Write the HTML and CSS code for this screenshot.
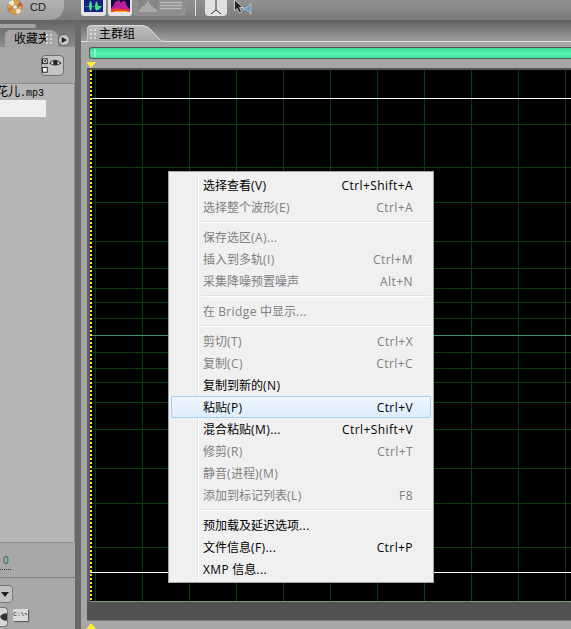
FILE: index.html
```html
<!DOCTYPE html>
<html lang="zh">
<head>
<meta charset="utf-8">
<title>Audition</title>
<link rel="stylesheet" href="styles.css">
</head>
<body>
<div class="app">
  <header class="toolbar">
    <div class="cd-pill">
      <svg class="cd-icon" width="16" height="16" viewBox="0 0 16 16"><circle cx="8" cy="8" r="7.500" fill="#d8a24a" stroke="#8a7a66" stroke-width=".6"/><path d="M8 8 L1.200 4.500 A7.500 7.500 0 0 1 6 .8Z" fill="#f3ecd6"/><path d="M8 8 L14.800 11.500 A7.500 7.500 0 0 1 10 15.200Z" fill="#efe2bc"/><path d="M8 8 L13.500 2.800 A7.500 7.500 0 0 1 15.400 7Z" fill="#c2603c"/><path d="M8 8 L2.500 13.200 A7.500 7.500 0 0 1 .6 9Z" fill="#c9803e"/><circle cx="8" cy="8" r="2.400" fill="#e6e6e6" stroke="#777" stroke-width=".6"/></svg>
      <span class="cd-label">CD</span>
    </div>
    <div class="btn-group">
      <span class="tool-btn lit"><svg width="19" height="12" viewBox="0 0 19 12"><rect width="19" height="12" fill="#14207e"/><path d="M1 6H5Q5.500 1 6.500 1T8 6H11Q11.500 1.500 12.500 1.500T14 6H18Q14 11 12.500 10.500T11 6.500H8Q7.500 11 6.500 11T5 6.500H1Z" fill="#46e08a"/></svg></span>
      <span class="tool-btn lit second"><svg width="19" height="12" viewBox="0 0 19 12"><rect width="19" height="12" fill="#130a38"/><path d="M0 12V8L2 6 4 2 6 1 8 0 10 3 12 1 14 1 16 6 19 9V12Z" fill="#b0229c"/><path d="M0 12V10L5 8 10 9 15 9 19 11V12Z" fill="#f0442a"/><path d="M3 12V11H16V12Z" fill="#ffb03a"/></svg></span>
      <div class="dim-group">
        <span class="tool-dim"><svg width="20" height="12" viewBox="0 0 20 12"><rect width="20" height="12" fill="#868686"/><path d="M2 12V9M4 12V7M6 12V6M8 12V3M10 12V1M12 12V4M14 12V6M16 12V8M18 12V9" stroke="#cdcdcd"/></svg></span>
        <span class="tool-dim"><svg width="22" height="12" viewBox="0 0 22 12"><rect width="22" height="12" fill="#8e8e8e"/><path d="M0 2.500H22M0 5.500H22M0 8.500H22" stroke="#bcbcbc" stroke-width="1.500"/></svg></span>
      </div>
    </div>
    <span class="tool-sep"></span>
    <span class="tool-btn single"><svg width="14" height="14" viewBox="0 0 14 14"><path d="M7 0V10M7 10L2 14M7 10L12 14" stroke="#333" fill="none"/></svg></span>
    <svg class="cursor-icon" width="18" height="15" viewBox="0 0 18 15"><path d="M.5 0V11L3 8.500 5.500 13 7.500 12 5.500 7.500H9Z" fill="#222" stroke="#eee" stroke-width=".7"/><path d="M9 8 12 8 17 3V14L12 9.500H9Z" fill="#6c9cc6" stroke="#dce6ee" stroke-width=".5"/></svg>
  </header>

  <div class="workspace">
    <aside class="left-panel">
      <div class="left-top">
        <div class="left-strip"></div>
        <div class="left-tabs">
          <div class="left-tab">
            <span class="left-tab-text">收藏夹</span>
            <span class="grip small"></span>
          </div>
          <span class="round-btn"><svg width="6" height="6" viewBox="0 0 8 8"><path d="M1 0 8 4 1 8Z" fill="#222"/></svg></span>
        </div>
      </div>
      <div class="left-tools">
        <span class="eye-btn">
          <svg width="22" height="20" viewBox="0 0 22 20"><rect x=".5" y="2.500" width="5" height="5" fill="#fff" stroke="#222"/><path d="M1.500 3.500l3 3M4.500 3.500l-3 3" stroke="#222"/><rect x=".5" y="11.500" width="5" height="5" fill="#fff" stroke="#222"/><path d="M8 7Q13 1 20 7 13 11 8 7Z" fill="#ddd" stroke="#222"/><circle cx="14" cy="6.500" r="2.400" fill="#222"/></svg>
        </span>
      </div>
      <div class="file-list">
        <div class="file-name"><span class="file-cjk">花儿</span><span class="file-ext">.mp3</span></div>
        <div class="file-selected"></div>
      </div>
      <div class="left-meter">
        <span class="meter-zero">0</span>
        <span class="meter-dots"></span>
      </div>
      <div class="left-controls">
        <span class="drop-btn"><svg width="8" height="5" viewBox="0 0 8 5"><path d="M0 0H8L4 5Z" fill="#222"/></svg></span>
        <div class="left-icons">
          <span class="mini-eye"><svg width="8" height="10" viewBox="0 0 8 10"><path d="M0 5Q3 0 8 1V9Q3 10 0 5Z" fill="#333"/></svg></span>
          <span class="cmd-icon">C:\&gt;</span>
        </div>
      </div>
    </aside>
    <div class="divider"></div>
    <main class="main-panel">
      <div class="main-tabs">
        <div class="main-tab">
          <svg class="tab-shape" width="78" height="17" viewBox="0 0 78 17"><defs><linearGradient id="tabfill" x1="0" y1="0" x2="0" y2="1"><stop offset="0" stop-color="#bdbdbd"/><stop offset="1" stop-color="#a6a6a6"/></linearGradient></defs><path d="M0 17V5Q0 .5 5 .5H55Q61 .5 65 6L72 14Q74 16.500 78 16.500V17Z" fill="url(#tabfill)" stroke="#dcdcdc"/></svg>
          <span class="grip"></span>
          <span class="tab-label">主群组</span>
        </div>
      </div>
      <div class="main-body">
        <div class="overview"><span class="overview-handle"></span></div>
        <div class="ruler"><span class="marker"></span></div>
        <div class="wave-frame">
          <svg class="wave" width="481" height="532" viewBox="0 0 481 532" shape-rendering="crispEdges">
            <rect width="481" height="532" fill="#000"/>
            <g class="grid">
              <path d="M5.500 0V532M52.500 0V532M99.500 0V532M146.500 0V532M193.500 0V532M240.500 0V532M287.500 0V532M334.500 0V532M381.500 0V532M428.500 0V532M475.500 0V532"/>
              <path d="M0 54.500H481M0 97.500H481M0 132.500H481M0 171.500H481M0 198.500H481M0 218.500H481M0 232.500H481M0 248.500H481M0 282.500H481M0 298.500H481M0 312.500H481M0 332.500H481M0 359.500H481M0 398.500H481M0 433.500H481M0 477.500H481"/>
            </g>
            <path class="midline" d="M0 265.500H481"/>
            <path class="trace" d="M0 28.500H481M0 502.500H481"/>
            <path class="cursor-line" d="M1 0V532"/>
            <path class="base" d="M0 531.500H481"/>
          </svg>
        </div>
        <div class="wave-footer"></div>
        <div class="bottom-ruler"><span class="marker up"></span></div>
      </div>
    </main>
  </div>

  <nav class="context-menu">
    <div class="menu-row"><span>选择查看<i class="lat">(V)</i></span><span class="lat">Ctrl+Shift+A</span></div>
    <div class="menu-row off"><span>选择整个波形<i class="lat">(E)</i></span><span class="lat">Ctrl+A</span></div>
    <div class="menu-sep"></div>
    <div class="menu-row off"><span>保存选区<i class="lat">(A)...</i></span></div>
    <div class="menu-row off"><span>插入到多轨<i class="lat">(I)</i></span><span class="lat">Ctrl+M</span></div>
    <div class="menu-row off"><span>采集降噪预置噪声</span><span class="lat">Alt+N</span></div>
    <div class="menu-sep"></div>
    <div class="menu-row off"><span>在 <i class="lat">Bridge</i> 中显示<i class="lat">...</i></span></div>
    <div class="menu-sep"></div>
    <div class="menu-row off"><span>剪切<i class="lat">(T)</i></span><span class="lat">Ctrl+X</span></div>
    <div class="menu-row off"><span>复制<i class="lat">(C)</i></span><span class="lat">Ctrl+C</span></div>
    <div class="menu-row"><span>复制到新的<i class="lat">(N)</i></span></div>
    <div class="menu-row hot"><span>粘贴<i class="lat">(P)</i></span><span class="lat">Ctrl+V</span></div>
    <div class="menu-row"><span>混合粘贴<i class="lat">(M)...</i></span><span class="lat">Ctrl+Shift+V</span></div>
    <div class="menu-row off"><span>修剪<i class="lat">(R)</i></span><span class="lat">Ctrl+T</span></div>
    <div class="menu-row off"><span>静音<i class="lat">(</i>进程<i class="lat">)(M)</i></span></div>
    <div class="menu-row off"><span>添加到标记列表<i class="lat">(L)</i></span><span class="lat">F8</span></div>
    <div class="menu-sep"></div>
    <div class="menu-row"><span>预加载及延迟选项<i class="lat">...</i></span></div>
    <div class="menu-row"><span>文件信息<i class="lat">(F)...</i></span><span class="lat">Ctrl+P</span></div>
    <div class="menu-row"><span><i class="lat">XMP</i> 信息<i class="lat">...</i></span></div>
  </nav>
</div>
</body>
</html>
```
FILE: styles.css
```css
* { box-sizing: border-box; }
html, body { margin: 0; height: 100%; }
body { overflow: hidden; background: #a5a5a5; font-family: "Open Sans", "Noto Sans CJK SC", sans-serif; font-size: 12px; color: #000; }
.app { position: relative; width: 571px; height: 629px; overflow: hidden; display: flex; flex-direction: column; }

/* toolbar */
.toolbar { height: 20px; flex: none; display: flex; align-items: flex-start; background: linear-gradient(#8a8f96 0, #8f8f8f 2px, #7b7b7b 20px); }
.cd-pill { width: 64px; height: 20px; display: flex; align-items: flex-start; padding-left: 7px; gap: 7px; background: linear-gradient(#b2b2b2, #9f9f9f); border-bottom-right-radius: 14px; margin-right: 17px; flex: none; }
.cd-icon { margin-top: -1px; flex: none; }
.cd-label { font-family: "Liberation Sans", sans-serif; font-size: 11px; line-height: 14px; color: #222; }
.btn-group { display: flex; height: 16px; flex: none; }
.tool-btn { width: 25px; height: 16px; display: flex; justify-content: center; align-items: flex-start; flex: none; }
.tool-btn.lit { background: #e3e3e3; border-radius: 0 0 3px 3px; }
.tool-btn.second { margin-left: 2px; width: 24px; }
.dim-group { width: 53px; height: 16px; display: flex; gap: 2px; padding-left: 5px; background: #8f8f8f; border-radius: 0 0 4px 4px; margin-left: 1px; }
.tool-dim { display: block; height: 12px; }
.tool-dim svg { display: block; }
.tool-sep { width: 1px; height: 16px; margin: 0 9px; background: #ddd; flex: none; }
.tool-btn.single { width: 22px; background: #e1e1e1; border-radius: 0 0 4px 4px; margin-right: 7px; }
.cursor-icon { flex: none; }

/* workspace */
.workspace { flex: 1; min-height: 0; display: flex; }
.left-panel { width: 75px; flex: none; display: flex; flex-direction: column; background: #a8a8a8; }
.left-top { height: 27px; flex: none; display: flex; flex-direction: column; background: linear-gradient(#646464, #8e8e8e); }
.left-strip { height: 4px; width: 36px; margin-top: 4px; background: #a4a4a4; border-radius: 0 3px 3px 0; flex: none; }
.left-tabs { flex: 1; min-height: 0; display: flex; align-items: flex-end; position: relative; }
.left-tab { margin-left: 5px; padding-left: 9px; width: 53px; height: 17px; display: flex; align-items: center; background: #a5a5a5; border-radius: 5px 8px 0 0; }
.left-tab-text { width: 32px; flex: none; line-height: 16px; font-size: 12px; white-space: nowrap; overflow: hidden; }
.grip { display: inline-block; flex: none; width: 7px; height: 10px; background-image: radial-gradient(circle at 1px 1px, #d8d8d8 1px, transparent 1.200px); background-size: 4px 4px; }
.round-btn { width: 12px; height: 12px; margin-bottom: 1px; border-radius: 50%; background: #c9c9c9; border: 1px solid #666; display: flex; align-items: center; justify-content: center; flex: none; }
.left-tools { height: 36px; flex: none; display: flex; justify-content: flex-end; padding: 8px 11px 0 0; }
.eye-btn { width: 23px; height: 21px; background: #c4c4c4; border: 1px solid #6f6f6f; border-radius: 4px; display: flex; align-items: center; justify-content: center; }
.file-list { height: 460px; flex: none; background: #b6b6b6; border-top: 1px solid #8c8c8c; border-right: 1px solid #8c8c8c; border-bottom: 1px solid #8c8c8c; border-radius: 0 0 2px 0; overflow: hidden; }
.file-name { height: 16px; line-height: 16px; white-space: nowrap; margin-left: -4px; display: flex; align-items: baseline; }
.file-cjk { font-size: 12px; }
.file-ext { font-family: "Liberation Mono", monospace; font-size: 10px; }
.file-selected { width: 46px; height: 17px; background: #eeeeee; }
.left-meter { height: 35px; flex: none; position: relative; border-bottom: 1px solid #808080; }
.meter-zero { position: absolute; left: 3px; top: 12px; font-family: "Liberation Sans", sans-serif; font-size: 10px; line-height: 12px; color: #1c6a5a; }
.meter-dots { position: absolute; left: 0; top: 26px; width: 11px; border-top: 1px dotted #333; }
.left-controls { flex: 1; min-height: 0; display: flex; flex-direction: column; }
.drop-btn { margin: 7px 0 0 -3px; width: 16px; height: 18px; background: #c2c2c2; border: 1px solid #777; border-radius: 4px; display: flex; align-items: center; justify-content: center; flex: none; }
.left-icons { display: flex; align-items: flex-start; gap: 5px; margin-top: 4px; height: 20px; }
.mini-eye { width: 8px; height: 20px; background: #d6d6d6; border: 1px solid #777; border-left: 0; border-radius: 0 4px 4px 0; display: flex; align-items: center; }
.cmd-icon { margin-top: 2px; width: 15px; height: 12px; background: #dcdcdc; font-family: "Liberation Mono", monospace; font-size: 6px; line-height: 12px; text-align: center; box-shadow: 1px 1px 1px #555; border-radius: 2px 0 0 0; overflow: hidden; white-space: nowrap; }
.divider { width: 6px; flex: none; background: #696969; }

/* main */
.main-panel { flex: 1; min-width: 0; display: flex; flex-direction: column; background: #a6a6a6; }
.main-tabs { height: 22px; flex: none; display: flex; align-items: flex-end; padding-left: 6px; background: linear-gradient(#5f5f5f, #9c9c9c 20px); box-shadow: inset 0 -1px 0 #e6e6e6; }
.main-tab { position: relative; width: 78px; height: 17px; display: flex; align-items: center; padding-left: 3px; gap: 2px; }
.tab-shape { position: absolute; left: 0; top: 0; }
.main-tab .grip, .tab-label { position: relative; }
.tab-label { font-size: 12px; line-height: 16px; color: #000; }
.main-body { flex: 1; min-height: 0; display: flex; flex-direction: column; }
.overview { height: 12px; flex: none; margin: 5px 0 0 8px; border-top: 1px solid #555; border-bottom: 1px solid #555; border-left: 1px solid #555; border-radius: 3px 0 0 3px; background: linear-gradient(#3ad99c, #56f4ae 55%, #44e2a2); position: relative; }
.overview-handle { position: absolute; left: 4px; top: 1px; bottom: 1px; width: 2px; background: #8ff2c4; }
.ruler { height: 11px; flex: none; position: relative; border-bottom: 2px solid #555; margin-left: 6px; }
.marker { position: absolute; left: -1px; top: 3px; width: 0; height: 0; border-left: 5px solid transparent; border-right: 5px solid transparent; border-top: 6px solid #ffe93a; }
.marker.up { top: 2px; border-top: 0; border-bottom: 6px solid #ffe93a; }
.wave-frame { height: 532px; flex: none; margin-left: 6px; padding-left: 3px; background: #5e5e5e; overflow: hidden; }
.wave { display: block; }
.grid path { stroke: #0b3c0b; stroke-width: 1; fill: none; }
.midline { stroke: #3f9070; stroke-width: 1; }
.trace { stroke: #fff; stroke-width: 1; }
.cursor-line { stroke: #ffef00; stroke-dasharray: 2 2; stroke-width: 2; }
.base { stroke: #7aa07a; stroke-width: 1; }
.wave-footer { height: 19px; flex: none; margin-left: 6px; background: #525252; border-bottom: 1px solid #7c7c7c; }
.bottom-ruler { flex: 1; min-height: 0; position: relative; margin-left: 6px; }

/* context menu */
.context-menu { position: absolute; left: 168px; top: 171px; width: 266px; height: 412px; padding: 2px; background: #f0f0f0; border: 1px solid #a3a3a3; }
.context-menu::before { content: ""; position: absolute; left: 28px; top: 2px; bottom: 2px; width: 2px; background: linear-gradient(90deg, #e2e3e3 50%, #fff 50%); }
.menu-row { position: relative; height: 22px; display: flex; justify-content: space-between; align-items: center; padding: 1px 18px 0 32px; white-space: nowrap; line-height: 21px; font-size: 12px; color: #000; }
.lat { font-style: normal; letter-spacing: .42px; }
.menu-row.off { color: #7f7f7f; }
.menu-row.hot { background: linear-gradient(#f1f7fe, #dcebfc); box-shadow: inset 0 0 0 1px #a8d0f5; border-radius: 2px; }
.menu-sep { position: relative; height: 8px; margin-left: 30px; }
.menu-sep::after { content: ""; position: absolute; left: 0; right: 0; top: 3px; height: 2px; background: linear-gradient(#e0e0e0 50%, #fff 50%); }
```
